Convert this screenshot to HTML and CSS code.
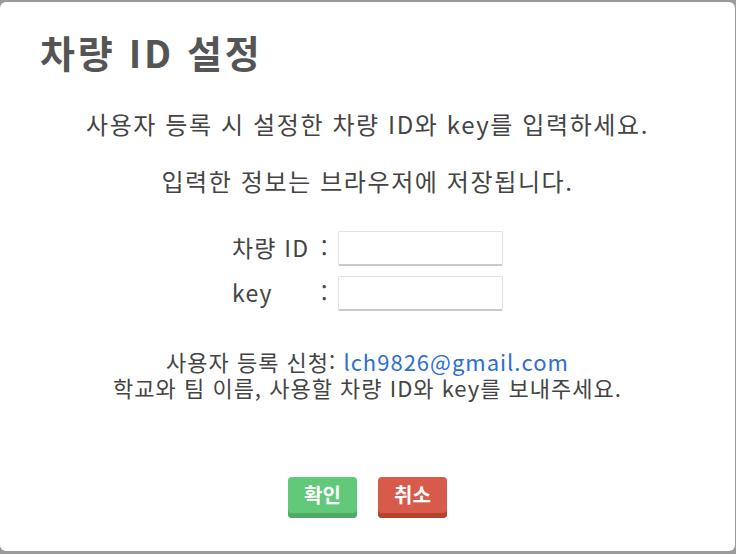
FILE: index.html
```html
<!DOCTYPE html>
<html lang="ko">
<head>
<meta charset="utf-8">
<link rel="stylesheet" href="styles.css">
</head>
<body>
<div class="backdrop">
  <div class="dialog">
    <h1 class="title">차량 ID 설정</h1>
    <p class="msg msg-first">사용자 등록 시 설정한 차량 ID와 key를 입력하세요.</p>
    <p class="msg msg-second">입력한 정보는 브라우저에 저장됩니다.</p>
    <div class="form">
      <span class="label">차량 ID</span><span class="colon">:</span><input class="field" type="text">
      <span class="label">key</span><span class="colon">:</span><input class="field" type="text">
    </div>
    <div class="note">
      <p class="note-line">사용자 등록 신청: <span class="mail">lch9826@gmail.com</span></p>
      <p class="note-line">학교와 팀 이름, 사용할 차량 ID와 key를 보내주세요.</p>
    </div>
    <div class="actions">
      <button class="btn btn-ok">확인</button>
      <button class="btn btn-cancel">취소</button>
    </div>
  </div>
</div>
</body>
</html>
```
FILE: styles.css
```css
html, body {
  margin: 0;
  padding: 0;
}
body {
  background: #9b9b9b;
  width: 736px;
  height: 554px;
  overflow: hidden;
  font-family: "Noto Sans CJK KR", "Noto Sans", sans-serif;
  color: #444;
}
.backdrop {
  padding: 2px 1px 3px 0;
}
.dialog {
  background: #fff;
  height: 549px;
  border-radius: 6px;
  display: flex;
  flex-direction: column;
}
.title {
  margin: 24px 0 0 40px;
  font-size: 38px;
  font-weight: 700;
  color: #555;
  line-height: 52px;
  letter-spacing: 2.7px;
}
.msg {
  margin: 0;
  text-align: center;
  font-size: 24px;
  line-height: 30px;
  letter-spacing: 1.6px;
  color: #444;
}
.msg-first {
  margin-top: 31px;
}
.msg-second {
  margin-top: 27px;
}
.form {
  margin: 35px auto 0;
  display: grid;
  grid-template-columns: 86px 20px 165px;
  row-gap: 10px;
  align-items: center;
  font-size: 23px;
  line-height: 30px;
  color: #444;
}
.label {
  letter-spacing: 1.2px;
  margin-top: -4px;
}
.colon {
  padding-left: 3px;
  margin-top: -4px;
}
.field {
  width: 165px;
  height: 35px;
  box-sizing: border-box;
  border: 1px solid #e2e2e2;
  border-bottom: 2px solid #c9c9c9;
  border-radius: 2px;
  background: #fff;
  margin: 0;
  padding: 0 6px;
  outline: none;
}
.note {
  margin: 37px 0 0;
  text-align: center;
  font-size: 22px;
  letter-spacing: 1px;
  color: #444;
  display: flex;
  flex-direction: column;
}
.note-line {
  margin: 0;
  height: 26px;
  line-height: 26px;
}
.mail {
  color: #2d6fd4;
}
.actions {
  margin-top: 77px;
  display: flex;
  justify-content: center;
  gap: 21px;
}
.btn {
  width: 69px;
  height: 41px;
  border: none;
  border-radius: 4px;
  color: #fff;
  font-family: "Noto Sans CJK KR", sans-serif;
  font-size: 20px;
  font-weight: 700;
  padding: 0 0 5px;
  line-height: 36px;
  cursor: pointer;
}
.btn-ok {
  background: #62c87a;
  box-shadow: inset 0 -5px 0 #4faa63;
}
.btn-cancel {
  background: #d85a4a;
  box-shadow: inset 0 -5px 0 #b6432f;
}
```
